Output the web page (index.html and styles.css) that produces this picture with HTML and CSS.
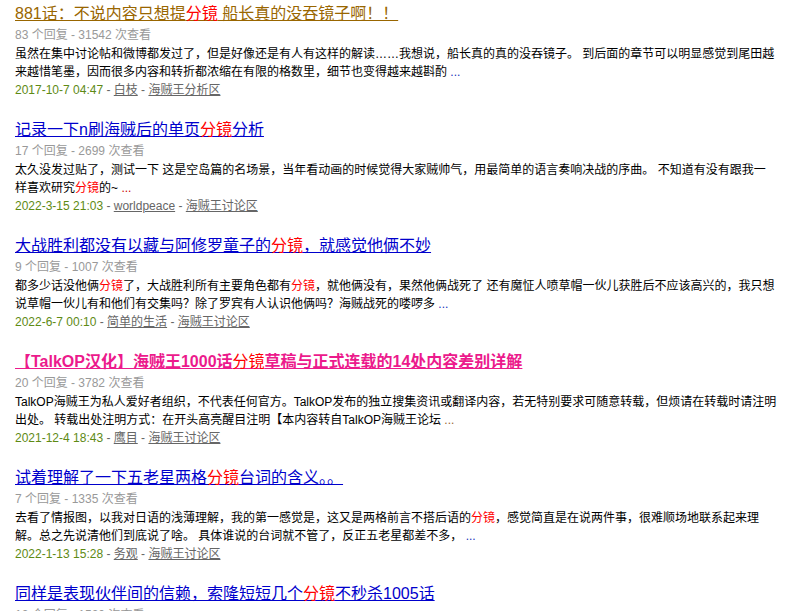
FILE: index.html
```html
<!DOCTYPE html>
<html lang="zh-CN">
<head>
<meta charset="utf-8">
<title>搜索结果</title>
<link rel="stylesheet" href="styles.css">
</head>
<body>
<ul class="results">
  <li class="item">
    <h3 class="title"><a href="#" class="t-brown">881话：不说内容只想提<em class="hl">分镜</em> 船长真的没吞镜子啊！！</a></h3>
    <p class="stats">83 个回复 - 31542 次查看</p>
    <p class="excerpt">虽然在集中讨论帖和微博都发过了，但是好像还是有人有这样的解读……我想说，船长真的真的没吞镜子。 到后面的章节可以明显感觉到尾田越来越惜笔墨，因而很多内容和转折都浓缩在有限的格数里，细节也变得越来越斟酌 <span class="more more-blue">...</span></p>
    <p class="meta"><span class="date">2017-10-7 04:47</span> - <a href="#" class="lnk">白枝</a> - <a href="#" class="lnk">海贼王分析区</a></p>
  </li>
  <li class="item">
    <h3 class="title"><a href="#" class="t-blue">记录一下n刷海贼后的单页<em class="hl">分镜</em>分析</a></h3>
    <p class="stats">17 个回复 - 2699 次查看</p>
    <p class="excerpt">太久没发过贴了，测试一下 这是空岛篇的名场景，当年看动画的时候觉得大家贼帅气，用最简单的语言奏响决战的序曲。 不知道有没有跟我一样喜欢研究<em class="hl">分镜</em>的~ <span class="more more-red">...</span></p>
    <p class="meta"><span class="date">2022-3-15 21:03</span> - <a href="#" class="lnk">worldpeace</a> - <a href="#" class="lnk">海贼王讨论区</a></p>
  </li>
  <li class="item">
    <h3 class="title"><a href="#" class="t-blue">大战胜利都没有以藏与阿修罗童子的<em class="hl">分镜</em>，就感觉他俩不妙</a></h3>
    <p class="stats">9 个回复 - 1007 次查看</p>
    <p class="excerpt">都多少话没他俩<em class="hl">分镜</em>了，大战胜利所有主要角色都有<em class="hl">分镜</em>，就他俩没有，果然他俩战死了 还有魔怔人喷草帽一伙儿获胜后不应该高兴的，我只想说草帽一伙儿有和他们有交集吗？除了罗宾有人认识他俩吗？海贼战死的喽啰多 <span class="more more-blue">...</span></p>
    <p class="meta"><span class="date">2022-6-7 00:10</span> - <a href="#" class="lnk">简单的生活</a> - <a href="#" class="lnk">海贼王讨论区</a></p>
  </li>
  <li class="item">
    <h3 class="title"><a href="#" class="t-pink">【TalkOP汉化】海贼王1000话<em class="hl hl-thin">分镜</em>草稿与正式连载的14处内容差别详解</a></h3>
    <p class="stats">20 个回复 - 3782 次查看</p>
    <p class="excerpt">TalkOP海贼王为私人爱好者组织，不代表任何官方。TalkOP发布的独立搜集资讯或翻译内容，若无特别要求可随意转载，但烦请在转载时请注明出处。 转载出处注明方式：在开头高亮醒目注明【本内容转自TalkOP海贼王论坛 <span class="more more-brown">...</span></p>
    <p class="meta"><span class="date">2021-12-4 18:43</span> - <a href="#" class="lnk">鹰目</a> - <a href="#" class="lnk">海贼王讨论区</a></p>
  </li>
  <li class="item">
    <h3 class="title"><a href="#" class="t-blue">试着理解了一下五老星两格<em class="hl">分镜</em>台词的含义。。</a></h3>
    <p class="stats">7 个回复 - 1335 次查看</p>
    <p class="excerpt">去看了情报图，以我对日语的浅薄理解，我的第一感觉是，这又是两格前言不搭后语的<em class="hl">分镜</em>，感觉简直是在说两件事，很难顺场地联系起来理解。总之先说清他们到底说了啥。 具体谁说的台词就不管了，反正五老星都差不多， <span class="more more-blue">...</span></p>
    <p class="meta"><span class="date">2022-1-13 15:28</span> - <a href="#" class="lnk">务观</a> - <a href="#" class="lnk">海贼王讨论区</a></p>
  </li>
  <li class="item">
    <h3 class="title"><a href="#" class="t-blue">同样是表现伙伴间的信赖，索隆短短几个<em class="hl">分镜</em>不秒杀1005话</a></h3>
    <p class="stats">12 个回复 - 1520 次查看</p>
    <p class="excerpt">……</p>
  </li>
</ul>
</body>
</html>
```

FILE: styles.css
```css
html, body {
  margin: 0;
  padding: 0;
  background: #fff;
}

body {
  font-family: "Liberation Sans", "Noto Sans CJK SC", sans-serif;
  font-size: 12px;
  color: #000;
}

.results {
  list-style: none;
  margin: 0;
  padding: 4px 0 0 15px;
  width: 762px;
}

.item {
  margin: 0 0 21px 0;
}

.title {
  margin: 0;
  font-size: 16px;
  line-height: 20px;
  font-weight: normal;
}

.title a {
  text-decoration: underline;
}

.t-blue { color: #0000cc; }
.t-brown { color: #996600; }
.t-pink { color: #ec1a8c; font-weight: bold; }

.hl {
  font-style: normal;
  color: #ff0000;
}

.hl-thin {
  font-weight: normal;
}

.stats {
  margin: 2px 0 0 0;
  line-height: 18px;
  color: #999;
}

.excerpt {
  margin: 1px 0 0 0;
  line-height: 18px;
  color: #000;
}

.more-blue { color: #2233bb; }
.more-red { color: #cc0000; }
.more-brown { color: #996633; }

.meta {
  margin: 0;
  line-height: 18px;
  color: #666;
}

.date {
  color: #5e8a14;
}

.lnk {
  color: #666;
  text-decoration: underline;
}
```
